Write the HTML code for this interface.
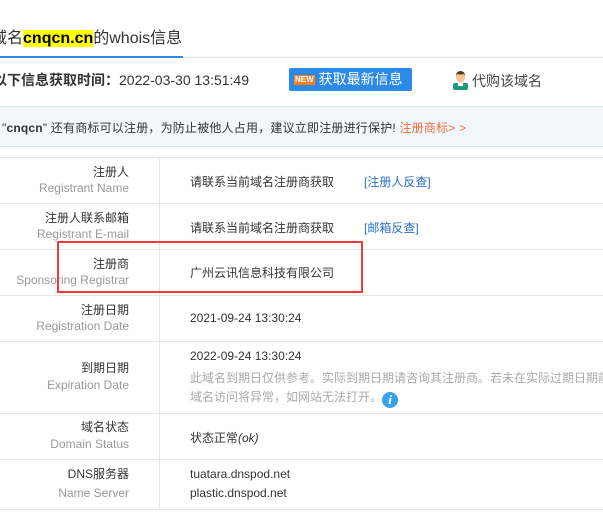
<!DOCTYPE html>
<html><head><meta charset="utf-8"><style>
*{margin:0;padding:0;box-sizing:border-box}
body{width:603px;height:516px;overflow:hidden;background:#fff;font-family:"Liberation Sans","Noto Sans CJK SC",sans-serif;color:#333;position:relative}
.a{position:absolute;white-space:nowrap}
.hl{position:absolute;left:0;right:0;height:1px;background:#e6e6e6}
.lc{position:absolute;right:474px;text-align:right;font-size:12px;color:#333}
.le{position:absolute;right:474px;text-align:right;font-size:12px;color:#999}
.v{position:absolute;left:190px;font-size:12px;color:#333;white-space:nowrap}
</style></head><body>
<div class="a" style="left:-9px;top:28px;font-size:16px;color:#333;line-height:22px">域名<span style="background:#ff0;color:#000;font-weight:bold">cnqcn.cn</span>的whois信息</div>
<div class="a" style="left:0;top:56px;width:183px;height:2px;background:#2b8ae8"></div>
<div class="a" style="left:183px;top:57px;right:0;height:1px;background:#e2e2e2"></div>
<div class="a" style="left:-7px;top:70px;font-size:14px;color:#333"><b>以下信息获取时间：</b>2022-03-30 13:51:49</div>
<div class="a" style="left:289px;top:68px;width:123px;height:23px;background:#2b8ae8;border-radius:2px;color:#fff;font-size:14px;line-height:23px;padding-left:5px"><span style="display:inline-block;background:#f7821c;color:#fff;font-size:8px;font-weight:bold;line-height:10px;padding:0 1px;vertical-align:2px;margin-right:4px">NEW</span>获取最新信息</div>
<svg class="a" style="left:452px;top:70px" width="17" height="20" viewBox="0 0 17 20"><rect x="1" y="13" width="15" height="7" rx="2" fill="#1a9a7a"/><rect x="6" y="12" width="5" height="4" fill="#fff"/><ellipse cx="8.5" cy="7" rx="4.5" ry="5.5" fill="#f3c49a"/><path d="M4 6 Q4 1 8.5 1 Q13 1 13 6 L12 4 Q8 5 5 4Z" fill="#5a3a22"/></svg>
<div class="a" style="left:472px;top:71px;font-size:14px;color:#444">代购该域名</div>
<div class="a" style="left:0;top:106px;right:0;height:41px;background:#f0f7fd;border-top:1px solid #d6e8f8;border-bottom:1px solid #d6e8f8"></div>
<div class="a" style="left:2px;top:119px;font-size:12px;color:#333;letter-spacing:0.2px">"<b>cnqcn</b>" 还有商标可以注册，为防止被他人占用，建议立即注册进行保护! <span style="color:#f36b3a">注册商标&gt; &gt;</span></div>
<div class="a" style="left:159px;top:157px;width:1px;height:352px;background:#e6e6e6"></div>
<div class="hl" style="top:157px"></div><div class="hl" style="top:203px"></div><div class="hl" style="top:249px"></div><div class="hl" style="top:295px"></div><div class="hl" style="top:341px"></div><div class="hl" style="top:413px"></div><div class="hl" style="top:459px"></div><div class="hl" style="top:509px"></div>
<div class="lc" style="top:163px">注册人</div><div class="le" style="top:181px">Registrant Name</div>
<div class="v" style="top:173px">请联系当前域名注册商获取<span style="color:#2b6fc4;margin-left:30px">[注册人反查]</span></div>
<div class="lc" style="top:209px">注册人联系邮箱</div><div class="le" style="top:227px">Registrant E-mail</div>
<div class="v" style="top:219px">请联系当前域名注册商获取<span style="color:#2b6fc4;margin-left:30px">[邮箱反查]</span></div>
<div class="lc" style="top:255px">注册商</div><div class="le" style="top:273px">Sponsoring Registrar</div>
<div class="v" style="top:264px">广州云讯信息科技有限公司</div>
<div class="a" style="left:57px;top:241px;width:306px;height:52px;border:2px solid #f23a3a"></div>
<div class="lc" style="top:301px">注册日期</div><div class="le" style="top:319px">Registration Date</div>
<div class="v" style="top:311px">2021-09-24 13:30:24</div>
<div class="lc" style="top:359px">到期日期</div><div class="le" style="top:378px">Expiration Date</div>
<div class="v" style="top:349px">2022-09-24 13:30:24</div>
<div class="v" style="top:369px;color:#aaa">此域名到期日仅供参考。实际到期日期请咨询其注册商。若未在实际过期日期前</div>
<div class="v" style="top:388px;color:#aaa">域名访问将异常，如网站无法打开。<span style="display:inline-block;width:16px;height:16px;border-radius:50%;background:#3aa0f0;color:#fff;font-style:italic;font-weight:bold;font-family:'Liberation Serif',serif;text-align:center;line-height:16px;font-size:13px;vertical-align:-3px">i</span></div>
<div class="lc" style="top:418px">域名状态</div><div class="le" style="top:437px">Domain Status</div>
<div class="v" style="top:429px">状态正常<i>(ok)</i></div>
<div class="lc" style="top:465px">DNS服务器</div><div class="le" style="top:486px">Name Server</div>
<div class="v" style="top:467px">tuatara.dnspod.net</div>
<div class="v" style="top:486px">plastic.dnspod.net</div>
</body></html>
